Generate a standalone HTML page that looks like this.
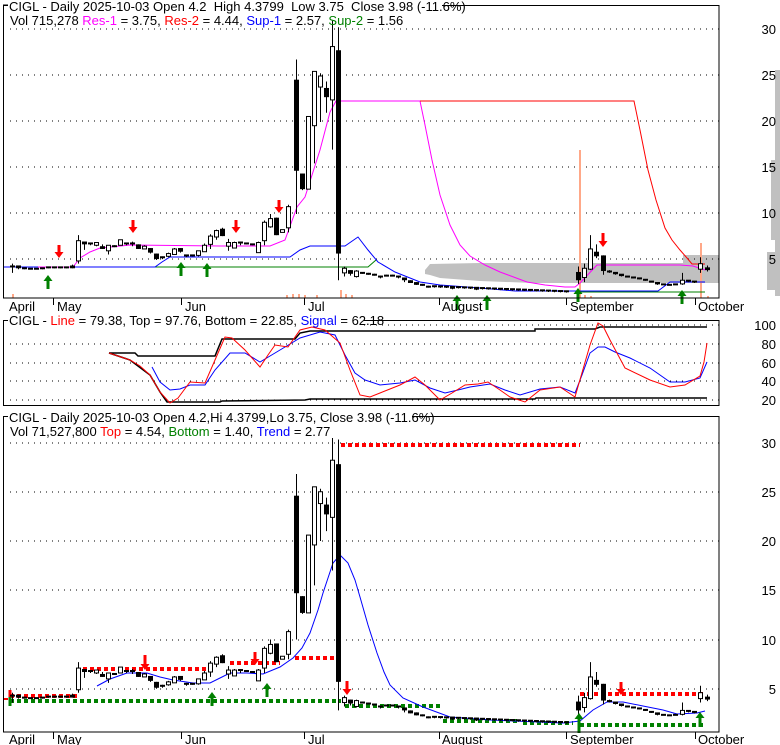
<!DOCTYPE html>
<html><head><meta charset="utf-8">
<style>
html,body{margin:0;padding:0;background:#fff;width:780px;height:745px;overflow:hidden}
svg{display:block}
text{font-family:"Liberation Sans",Arial,sans-serif;font-size:13px}
</style></head>
<body>
<svg id="s" width="780" height="745" xmlns="http://www.w3.org/2000/svg">
<rect width="780" height="745" fill="#fff"/>
<polygon fill="#c0c0c0" points="425,270 430,264 480,263 560,263 683,263 683,255 719,255 719,283 533,283 480,281 440,278 430,275 425,274"/>
<rect x="775" y="70" width="5" height="226" fill="#c0c0c0"/>
<rect x="771" y="160" width="9" height="80" fill="#c0c0c0"/>
<rect x="767" y="252" width="13" height="38" fill="#c0c0c0"/>
<g id="g"></g>
</svg>
<script>
var g=document.getElementById('g'),h='';
function y1(p){return 306-9.2*p}
function y3(p){return 738-9.85*p}
function ln(x1,y1_,x2,y2,c,w,extra){h+='<line x1="'+x1+'" y1="'+y1_+'" x2="'+x2+'" y2="'+y2+'" stroke="'+c+'" stroke-width="'+(w||1)+'" '+(extra||'')+'/>';}
function pl(pts,c,w,extra){h+='<polyline fill="none" stroke="'+c+'" stroke-width="'+(w||1)+'" points="'+pts+'" '+(extra||'')+'/>';}
function tx(x,y,s,c,anchor){h+='<text x="'+x+'" y="'+y+'" fill="'+(c||'#000')+'"'+(anchor?' text-anchor="'+anchor+'"':'')+'>'+s+'</text>';}
function dots(y,x0,x1){ln(x0,y,x1,y,'#000',1,'stroke-dasharray="1 5"');}
function down(x,top,bot,c){var m=bot-6;h+='<polygon fill="'+c+'" points="'+(x-1.5)+','+top+' '+(x+1.5)+','+top+' '+(x+1.5)+','+m+' '+(x+4.5)+','+m+' '+x+','+bot+' '+(x-4.5)+','+m+' '+(x-1.5)+','+m+'"/>';}
function up(x,top,bot,c){var m=top+6;h+='<polygon fill="'+c+'" points="'+(x-1.5)+','+bot+' '+(x+1.5)+','+bot+' '+(x+1.5)+','+m+' '+(x+4.5)+','+m+' '+x+','+top+' '+(x-4.5)+','+m+' '+(x-1.5)+','+m+'"/>';}

var C=[[12,4.3,4.6,3.6,4.2],[18,4.3,4.4,4.0,4.1],[24,4.1,4.2,4.0,4.05],[30,4.05,4.1,4.0,4.05],[36,4.05,4.1,4.0,4.05],[42,4.1,4.1,4.0,4.1],[48,4.15,4.2,4.1,4.2],[54,4.2,4.2,4.1,4.15],[60,4.2,4.2,4.1,4.15],[66,4.2,4.3,4.1,4.2],[72,4.4,4.5,4.1,4.1],
[78,4.9,7.7,4.6,7.1],[84,6.9,6.9,6.1,6.7],[90,6.8,6.9,6.6,6.7],[96,6.6,6.9,6.5,6.9],[102,6.5,6.7,6.2,6.2],[108,6.0,6.6,5.6,6.6],[114,6.4,6.6,6.4,6.5],[120,6.6,7.2,6.6,7.2],[126,6.8,6.9,6.6,6.8],[132,6.8,7.0,6.5,6.8],[138,6.7,6.7,6.2,6.2],[144,6.2,6.6,6.2,6.5],[150,6.3,6.3,5.7,5.8],[156,5.7,5.7,5.0,5.1],[162,5.3,5.4,5.1,5.2],[168,5.4,5.8,5.3,5.7],[174,5.6,6.3,5.6,6.2],[180,6.3,6.3,5.8,5.9],[186,5.5,5.6,5.3,5.4],[192,5.5,5.6,5.4,5.5],[198,5.5,6.0,5.4,6.0],[204,5.9,6.8,5.9,6.6],[210,6.7,7.8,6.2,7.6],[216,7.5,8.3,7.2,8.2],[222,8.4,8.5,7.6,7.6],[228,6.5,7.3,6.0,6.9],[234,6.3,7.0,6.3,6.9],[240,6.9,7.0,6.6,6.9],[246,6.8,6.9,6.7,6.8],[252,6.7,6.8,6.6,6.7],[258,5.8,7.0,5.8,6.9],[264,7.1,9.3,6.6,9.1],[270,8.6,10.0,8.5,9.5],[276,9.6,9.6,7.7,7.7],[282,8.0,8.3,8.0,8.3],[288,8.5,11.0,8.0,10.8],
[296,24.6,26.8,10.0,14.7],[302,14.4,14.4,12.6,12.7],[308,12.7,20.6,12.7,20.6],[314,19.6,25.5,15.5,25.5],[320,23.8,25.3,20.0,25.0],[326,23.7,24.4,21.0,22.7],[332,22.4,31.0,17.0,28.2],[338,27.8,30.3,2.8,5.7],
[344,3.6,4.3,3.2,4.1],[350,3.9,3.9,3.3,3.5],[356,3.2,3.9,3.1,3.8],[362,3.6,3.7,3.5,3.6],[368,3.5,3.6,3.4,3.5],[374,3.4,3.5,3.3,3.4],[380,3.2,3.3,3.0,3.1],[386,3.3,3.4,3.2,3.3],[392,3.3,3.4,3.2,3.2],[398,3.2,3.3,3.0,3.1],[404,3.1,3.1,2.6,2.8],[410,2.8,2.8,2.5,2.5],[416,2.6,2.6,2.3,2.3],[422,2.3,2.4,2.2,2.2],[428,2.1,2.2,2.0,2.05]];
for(var x=434;x<=566;x+=6){var p=2.1-(x-434)/132*0.55;var w=(x==452||x==476)?1:0;C.push(w?[x,p-0.15,p+0.05,p-0.2,p+0.05]:[x,p+0.05,p+0.1,p-0.1,p-0.05]);}
C=C.concat([[578,3.7,4.3,2.4,2.8],[584,3.1,4.6,2.6,4.1],[590,4.0,7.7,3.9,6.2],[596,5.9,6.7,5.2,5.4],[603,5.5,5.5,3.4,3.8],[609,3.75,3.9,3.6,3.7],[615,3.6,3.6,3.4,3.45],[621,3.4,3.4,3.2,3.25],[627,3.2,3.25,3.1,3.15],[633,3.1,3.1,3.0,3.05],[639,3.0,3.0,2.9,2.95],[645,2.85,2.9,2.75,2.8],[651,2.65,2.7,2.55,2.6],[657,2.5,2.5,2.3,2.35],[663,2.35,2.4,2.3,2.35],[669,2.3,2.35,2.25,2.3],[675,2.35,2.4,2.3,2.35],[682,2.4,3.6,2.3,2.8],[688,2.75,2.8,2.6,2.7],[694,2.65,2.7,2.5,2.6],[700,4.0,5.3,3.6,4.6],[707,4.2,4.4,3.75,3.9]]);

function candles(Y){
 C.forEach(function(c){var x=c[0],o=c[1],hi=c[2],lo=c[3],cl=c[4];
  ln(x+0.5,Y(hi),x+0.5,Y(lo),'#000',1);
  var t=Y(Math.max(o,cl)),b=Y(Math.min(o,cl));
  if(b-t<2){h+='<rect x="'+(x-2)+'" y="'+(t-1)+'" width="5" height="'+Math.max(2,b-t+1)+'" fill="#000"/>';}
  else if(cl>=o){h+='<rect x="'+(x-1.5)+'" y="'+t+'" width="4" height="'+(b-t)+'" fill="#fff" stroke="#000" stroke-width="1"/>';}
  else{h+='<rect x="'+(x-2)+'" y="'+t+'" width="5" height="'+(b-t)+'" fill="#000"/>';}
 });
}

[29,75,121,167,213,259].forEach(function(y){dots(y,10,719)});
var vc='#ffa888';
[[12,294],[286,295],[292,294],[298,294],[304,295],[316,295],[340,290],[345,294],[351,295],[579,150],[584,295],[590,296],[700,243],[707,296]].forEach(function(v){h+='<rect x="'+v[0]+'" y="'+v[1]+'" width="2" height="'+(298-v[1])+'" fill="'+vc+'"/>';});
pl('3,267 368,267 376,260','#008000',1);
pl('577,292 705,292','#008000',1);
pl('3,267 155,267 162,262 170,257 290,257 300,250 310,246 345,246 358,237 368,250 378,262 395,272 420,282 440,285 480,288 515,291 658,291 670,282 705,282','#0000ff',1);
pl('38,267 73,267 80,258 90,252 100,248 130,245 220,246 270,246 285,240 297,207 305,197 320,150 330,112 336,101 420,101 425,125 432,160 440,195 450,225 460,245 470,256 485,265 500,272 527,282 545,285 565,287 575,287 580,283 597,265 680,265 693,266 705,270','#ff00ff',1);
pl('420,101 634,101 640,130 648,170 656,200 665,228 672,240 680,250 687,258 692,264 705,264','#ff0000',1);
candles(y1);
down(59,245,258,'#ff0000');down(133,220,233,'#ff0000');down(236,220,233,'#ff0000');down(279,200,213,'#ff0000');down(603,233,247,'#ff0000');
up(48,275,289,'#008000');up(181,262,276,'#008000');up(207,263,277,'#008000');up(457,295,310,'#008000');up(487,295,310,'#008000');up(578,288,302,'#008000');up(682,290,304,'#008000');
h+='<rect x="3.5" y="5.5" width="715.5" height="292.5" fill="none" stroke="#000"/>';
h+='<rect x="8" y="0" width="434" height="12" fill="#fff"/>';
ln(3,5,8,5,'#000');
h+='<text x="9" y="11">CIGL - Daily 2025-10-03 Open 4.2&#160; High 4.3799&#160; Low 3.75&#160; Close 3.98 (-11.6%)</text>';
h+='<text x="10" y="25">Vol 715,278 <tspan fill="#ff00ff">Res-1</tspan> = 3.75, <tspan fill="#ff0000">Res-2</tspan> = 4.44, <tspan fill="#0000ff">Sup-1</tspan> = 2.57, <tspan fill="#008000">Sup-2</tspan> = 1.56</text>';
[[30,29],[25,75],[20,121],[15,167],[10,213],[5,259]].forEach(function(l){tx(776,l[1]+5,l[0],'#000','end')});
function months(yT,yB,base){
 [53,181,304,439,566,695].forEach(function(x){ln(x+0.5,yT,x+0.5,yB,'#000')});
 tx(9,base,'April');tx(57,base,'May');tx(185,base,'Jun');tx(308,base,'Jul');tx(442,base,'August');tx(570,base,'September');tx(698,base,'October');
}
months(298,305,311);

[325,344,363,381,400].forEach(function(y){dots(y,10,719)});
pl('109,353 135,353 138,356 215,356 222,339 295,339 300,333 310,331 535,331 535,329 595,329 600,327 707,327','#000',1.5);
pl('109,353 130,360 150,375 160,392 167,402 220,402 222,401 305,400 310,399 535,399 536,398 707,398','#000',1.5);
pl('152,367 160,382 170,390 180,389 190,385 205,385 215,370 230,353 245,353 260,362 270,356 280,350 290,344 300,338 320,332 335,335 345,355 355,373 365,380 380,385 400,383 415,380 430,388 445,393 458,390 470,387 490,384 505,390 520,395 540,389 560,387 575,393 582,375 590,353 598,347 605,347 615,352 630,358 650,368 670,382 685,382 700,378 707,362','#0000ff',1);
pl('109,353 130,360 140,366 150,375 160,392 170,403 178,398 190,382 205,383 215,360 225,337 232,338 245,350 260,367 268,355 275,345 288,347 300,330 312,327 325,330 340,343 350,370 360,395 370,397 380,393 400,385 415,377 425,385 440,400 452,393 465,385 478,384 488,382 500,390 510,397 525,402 540,390 560,387 575,397 590,345 598,323 603,326 610,340 625,368 650,380 670,387 685,385 700,376 704,362 707,343','#ff0000',1);
h+='<rect x="3.5" y="320.5" width="715.5" height="85" fill="none" stroke="#000"/>';
h+='<rect x="8" y="314" width="356" height="12" fill="#fff"/>';
ln(3,320.5,8,320.5,'#000');
h+='<text x="9" y="325">CIGL - <tspan fill="#ff0000">Line</tspan> = 79.38, Top = 97.76, Bottom = 22.85, <tspan fill="#0000ff">Signal</tspan> = 62.18</text>';
[[100,325],[80,344],[60,363],[40,381],[20,400]].forEach(function(l){tx(776,l[1]+5,l[0],'#000','end')});

[443,492,541,590,640,689].forEach(function(y){dots(y,10,719)});
var dr='stroke-dasharray="4 3"';
ln(3,699,8,699,'#ff0000',2);
ln(10,696,78,696,'#ff0000',4,dr);ln(10,701,341,701,'#008000',4,dr);
ln(83,669,215,669,'#ff0000',4,dr);ln(230,663,280,663,'#ff0000',4,dr);ln(295,658,337,658,'#ff0000',4,dr);
ln(341,445,580,445,'#ff0000',4,dr);ln(580,694,706,694,'#ff0000',4,dr);
ln(345,706,440,706,'#008000',4,dr);ln(443,721,518,721,'#008000',4,dr);ln(523,723,573,723,'#008000',4,dr);ln(580,725,706,725,'#008000',4,dr);
ln(10,697,10,706,'#008000',3);ln(10,690,10,697,'#ff0000',3);
pl('97,686 110,679 127,673 147,673 160,677 173,680 193,683 210,683 220,678 230,673 247,673 263,674 280,667 293,658 302,648 310,633 318,610 323,593 333,563 340,555 348,563 355,580 360,597 368,625 377,653 384,672 390,685 403,698 423,707 450,717 490,720 563,723 580,721 593,710 607,702 623,702 643,706 663,710 677,714 697,713 705,711','#0000ff',1);
candles(y3);
down(145,655,670,'#ff0000');down(255,652,665,'#ff0000');down(347,681,695,'#ff0000');down(621,682,695,'#ff0000');
up(212,692,706,'#008000');up(267,683,697,'#008000');up(579,713,733,'#008000');up(700,712,727,'#008000');
h+='<rect x="3.5" y="416.5" width="715.5" height="315.5" fill="none" stroke="#000"/>';
h+='<rect x="8" y="410" width="404" height="28" fill="#fff"/>';
ln(3,416.5,8,416.5,'#000');
h+='<text x="9" y="422">CIGL - Daily 2025-10-03 Open 4.2,Hi 4.3799,Lo 3.75, Close 3.98 (-11.6%)</text>';
h+='<text x="10" y="436">Vol 71,527,800 <tspan fill="#ff0000">Top</tspan> = 4.54, <tspan fill="#008000">Bottom</tspan> = 1.40, <tspan fill="#0000ff">Trend</tspan> = 2.77</text>';
[[30,443],[25,492],[20,541],[15,590],[10,640],[5,689]].forEach(function(l){tx(776,l[1]+5,l[0],'#000','end')});
months(732,739,744);

g.innerHTML=h;
</script>
</body></html>
